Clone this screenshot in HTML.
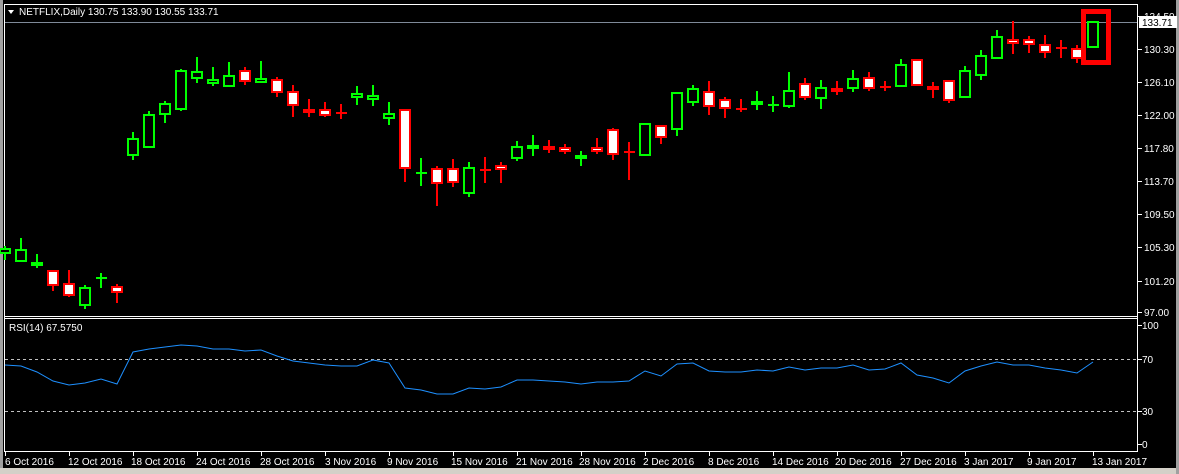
<!DOCTYPE html>
<html><head><meta charset="utf-8"><style>
html,body{margin:0;padding:0;background:#000;width:1179px;height:474px;overflow:hidden}
svg{display:block}
text{font-family:"Liberation Sans",sans-serif;font-size:10px;fill:#fff}
</style></head><body>
<svg id="s" width="1179" height="474" viewBox="0 0 1179 474" xmlns="http://www.w3.org/2000/svg">
<rect x="0" y="0" width="1179" height="474" fill="#000"/>
<rect x="0" y="0" width="3" height="474" fill="#a0a0a0"/>
<rect x="0" y="468" width="1179" height="6" fill="#d4d0c8"/>
<rect x="1176" y="0" width="3" height="474" fill="#a0a0a0"/>
<!-- frames -->
<line x1="4.5" y1="4" x2="4.5" y2="452" stroke="#fff"/>
<line x1="4" y1="4.5" x2="1138" y2="4.5" stroke="#fff"/>
<line x1="1137.5" y1="4" x2="1137.5" y2="452" stroke="#fff"/>
<line x1="4" y1="316.5" x2="1138" y2="316.5" stroke="#fff"/>
<line x1="4" y1="318.5" x2="1138" y2="318.5" stroke="#fff"/>
<line x1="4" y1="451.5" x2="1138" y2="451.5" stroke="#fff"/>
<!-- bid line -->
<line x1="5" y1="22.5" x2="1137" y2="22.5" stroke="#7f8a99"/>
<g id="c"></g>
<rect x="1083.5" y="11.5" width="25" height="51" fill="none" stroke="#ff0000" stroke-width="5"/>
<!-- header -->
<polygon points="8,10 14,10 11,14" fill="#fff"/>
<text x="19" y="15">NETFLIX,Daily  130.75 133.90 130.55 133.71</text>
<text x="9" y="331">RSI(14) 67.5750</text>
<!-- price axis -->
<g stroke="#fff">
<line x1="1138" y1="16.5" x2="1142" y2="16.5"/><line x1="1138" y1="49.5" x2="1142" y2="49.5"/>
<line x1="1138" y1="82.5" x2="1142" y2="82.5"/><line x1="1138" y1="115.5" x2="1142" y2="115.5"/>
<line x1="1138" y1="148.5" x2="1142" y2="148.5"/><line x1="1138" y1="181.5" x2="1142" y2="181.5"/>
<line x1="1138" y1="214.5" x2="1142" y2="214.5"/><line x1="1138" y1="247.5" x2="1142" y2="247.5"/>
<line x1="1138" y1="281.5" x2="1142" y2="281.5"/><line x1="1138" y1="312.5" x2="1142" y2="312.5"/>
<line x1="1138" y1="325.5" x2="1142" y2="325.5"/><line x1="1138" y1="359.5" x2="1142" y2="359.5"/>
<line x1="1138" y1="411.5" x2="1142" y2="411.5"/><line x1="1138" y1="444.5" x2="1142" y2="444.5"/>
</g>
<text x="1144" y="20">134.50</text>
<rect x="1139" y="16" width="38" height="12" fill="#fff"/>
<text x="1142" y="26" style="fill:#000">133.71</text>
<text x="1144" y="53">130.30</text><text x="1144" y="86">126.10</text>
<text x="1144" y="119">122.00</text><text x="1144" y="152">117.80</text>
<text x="1144" y="185">113.70</text><text x="1144" y="218">109.50</text>
<text x="1144" y="251">105.30</text><text x="1144" y="285">101.20</text>
<text x="1144" y="316">97.00</text>
<text x="1142" y="329">100</text><text x="1142" y="363">70</text>
<text x="1142" y="415">30</text><text x="1142" y="448">0</text>
<!-- RSI levels -->
<line x1="5" y1="359.5" x2="1137" y2="359.5" stroke="#c0c0c0" stroke-dasharray="3,3"/>
<line x1="5" y1="411.5" x2="1137" y2="411.5" stroke="#c0c0c0" stroke-dasharray="3,3"/>
<polyline id="rsi" fill="none" stroke="#1e90ff" stroke-width="1"/>
<!-- dates -->
<g id="dt"></g>
<text x="5" y="465">6 Oct 2016</text><text x="68" y="465">12 Oct 2016</text>
<text x="131" y="465">18 Oct 2016</text><text x="196" y="465">24 Oct 2016</text>
<text x="260" y="465">28 Oct 2016</text><text x="325" y="465">3 Nov 2016</text>
<text x="387" y="465">9 Nov 2016</text><text x="451" y="465">15 Nov 2016</text>
<text x="516" y="465">21 Nov 2016</text><text x="579" y="465">28 Nov 2016</text>
<text x="643" y="465">2 Dec 2016</text><text x="708" y="465">8 Dec 2016</text>
<text x="772" y="465">14 Dec 2016</text><text x="835" y="465">20 Dec 2016</text>
<text x="900" y="465">27 Dec 2016</text><text x="964" y="465">3 Jan 2017</text>
<text x="1027" y="465">9 Jan 2017</text><text x="1092" y="465">13 Jan 2017</text>
</svg>
<script>
var C=[
[246,249,253,260,'g'],[238,250,261,261,'g'],[254,263,265,268,'g'],[271,271,285,291,'r'],[270,284,295,297,'r'],
[285,288,305,309,'g'],[273,278,279,288,'g'],[284,287,292,303,'r'],[132,139,155,160,'g'],[111,115,147,148,'g'],
[101,104,114,123,'g'],[69,71,109,111,'g'],[57,72,78,83,'g'],[67,80,83,86,'g'],[62,76,86,86,'g'],
[67,71,81,85,'r'],[61,79,82,83,'g'],[77,80,92,97,'r'],[85,92,105,117,'r'],[99,110,112,117,'r'],
[102,110,115,117,'r'],[104,113,113,119,'r'],[86,94,97,105,'g'],[85,96,99,106,'g'],[102,114,118,125,'g'],
[110,110,168,182,'r'],[158,173,173,186,'g'],[166,169,183,206,'r'],[159,169,182,187,'r'],[162,168,193,197,'g'],
[157,170,170,183,'r'],[162,166,169,183,'r'],[141,147,158,161,'g'],[135,146,148,156,'g'],[140,147,149,153,'r'],
[144,148,151,154,'r'],[151,156,158,166,'g'],[138,148,151,154,'r'],[128,130,154,160,'r'],[142,152,152,180,'r'],
[123,124,155,155,'g'],[126,126,137,144,'r'],[93,93,129,136,'g'],[85,89,102,106,'g'],[81,92,106,115,'r'],
[97,100,108,118,'r'],[99,109,109,112,'r'],[91,102,104,110,'g'],[96,105,105,112,'g'],[72,91,106,108,'g'],
[78,84,97,100,'r'],[80,88,98,109,'g'],[81,89,91,95,'r'],[70,79,88,92,'g'],[72,78,88,91,'r'],
[81,87,87,91,'r'],[59,65,86,87,'g'],[59,60,85,85,'r'],[82,87,89,98,'r'],[81,81,100,103,'r'],
[66,71,97,97,'g'],[50,56,75,80,'g'],[30,37,58,58,'g'],[21,40,43,54,'r'],[36,40,44,53,'r'],
[35,45,52,58,'r'],[40,48,48,58,'r'],[45,49,58,63,'r'],[21,22,47,48,'g']];
var h='';
C.forEach(function(c,i){var x=5+16*i,col=c[4]=='g'?'#00ff00':'#ff0000';
h+='<line x1="'+x+'" y1="'+c[0]+'" x2="'+x+'" y2="'+c[3]+'" stroke="'+col+'" stroke-width="2"/>';
if(c[2]-c[1]<2){h+='<line x1="'+(x-5)+'" y1="'+c[1]+'" x2="'+(x+6)+'" y2="'+c[1]+'" stroke="'+col+'" stroke-width="2"/>';}
else h+='<rect x="'+(x-5)+'" y="'+c[1]+'" width="10" height="'+(c[2]-c[1])+'" fill="'+(c[4]=='g'?'#000':'#fff')+'" stroke="'+col+'" stroke-width="2"/>';
if(i%4==0||true){}
});
document.getElementById('c').innerHTML=h;
var R=[365,366,372,381,385,383,379,384,352,349,347,345,346,349,349,351,350,356,361,363,365,366,366,360,363,388,390,394,394,388,389,387,380,380,381,382,384,382,382,381,371,376,364,363,371,372,372,370,371,367,370,368,368,365,370,369,363,375,378,383,371,366,362,365,365,368,370,373,362];
document.getElementById('rsi').setAttribute('points',R.map(function(y,i){return (5+16*i)+','+y}).join(' '));
var t='',tx=[5,69,133,197,261,325,389,453,517,581,645,709,773,837,901,965,1029,1093];
tx.forEach(function(x){t+='<line x1="'+(x+0.5)+'" y1="452" x2="'+(x+0.5)+'" y2="456" stroke="#fff"/>';});
document.getElementById('dt').innerHTML=t;
</script>
</body></html>
